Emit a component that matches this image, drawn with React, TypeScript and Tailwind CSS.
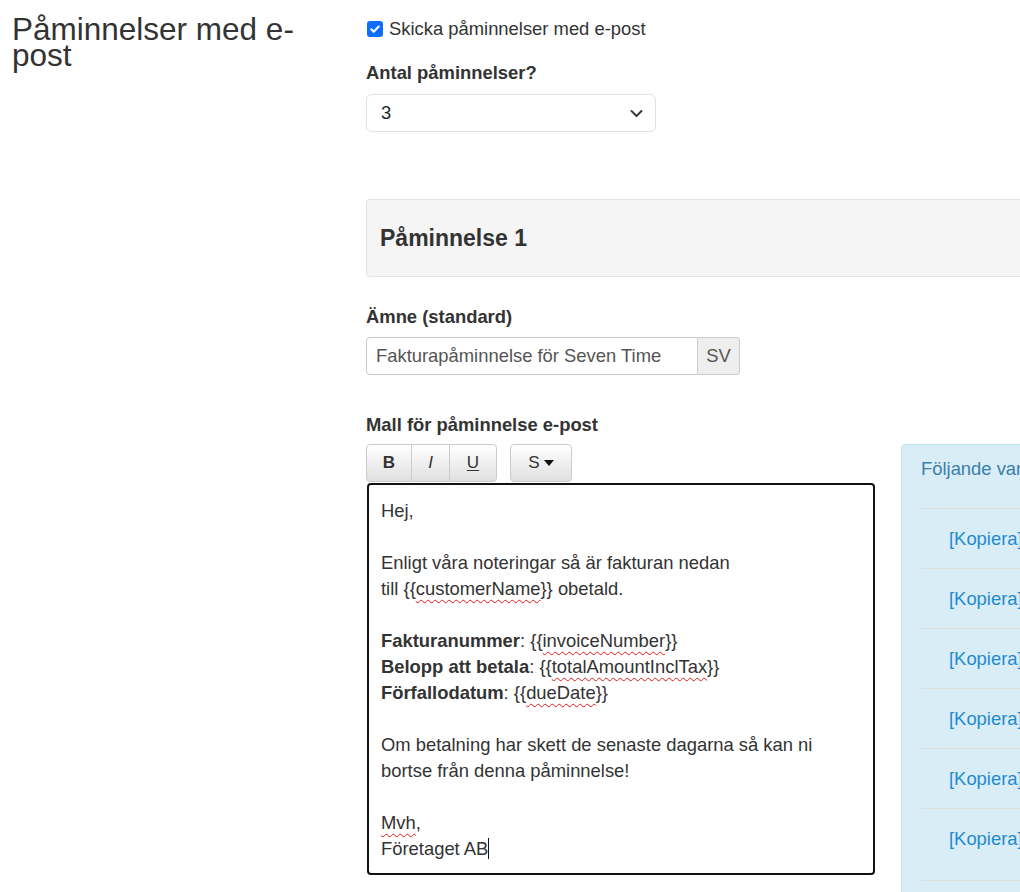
import React from "react";

const Var = ({ name }: { name: string }) => (
    <>
        {"{{"}
        <span className="underline decoration-wavy decoration-[#e01b1b] decoration-1 underline-offset-[4px]">{name}</span>
        {"}}"}
    </>
);

const Line = ({ children }: { children?: React.ReactNode }) => (
    <div className="h-[26px] whitespace-nowrap">{children}</div>
);

const ToolButton = ({ children, className = "" }: { children: React.ReactNode; className?: string }) => (
    <button className={`h-[38px] flex items-center justify-center bg-gradient-to-b from-white to-[#e0e0e0] border border-[#ccc] text-[#333] text-[17px] ${className}`}>
        {children}
    </button>
);

export default function App() {
    const rows = [0, 1, 2, 3, 4, 5];

    return (
        <div className="w-[1020px] h-[892px] overflow-hidden bg-white text-[#333] text-[18.4px] leading-[26px] font-['Liberation_Sans',Arial,sans-serif]">
            <div className="flex">
                <div className="w-[366px] shrink-0 pl-[12px] pr-[30px] pt-[16px]">
                    <h2 className="text-[31.5px] leading-[26px] font-normal">Påminnelser med e-post</h2>
                </div>

                <div className="w-[900px] shrink-0 pt-[16px]">
                    <label className="flex items-center gap-[6px]">
                        <span className="w-[16px] h-[16px] ml-[1px] rounded-[3px] bg-[#0d6efd] flex items-center justify-center">
                            <svg width="12" height="12" viewBox="0 0 12 12" fill="none">
                                <path d="M2.3 6.3l2.4 2.4 5-5.2" stroke="white" strokeWidth="2" strokeLinecap="round" strokeLinejoin="round" />
                            </svg>
                        </span>
                        <span>Skicka påminnelser med e-post</span>
                    </label>

                    <div className="mt-[18px] font-bold">Antal påminnelser?</div>
                    <div className="mt-[8px] w-[290px] h-[38px] border border-[#dee2e6] rounded-[6px] flex items-center justify-between pl-[14px] pr-[12px]">
                        <span className="text-[#212529]">3</span>
                        <svg width="13" height="9" viewBox="0 0 13 9" fill="none">
                            <path d="M1.5 2l5 5 5-5" stroke="#343a40" strokeWidth="2" strokeLinecap="round" strokeLinejoin="round" />
                        </svg>
                    </div>

                    <div className="mt-[67px] h-[78px] border border-[#e3e3e3] bg-[#f5f5f5] rounded-[4px] flex items-center px-[13px]">
                        <h4 className="text-[23px] font-bold leading-none">Påminnelse 1</h4>
                    </div>

                    <div className="mt-[27px] font-bold">Ämne (standard)</div>
                    <div className="mt-[7px] flex h-[38px] w-[374px]">
                        <div className="flex-1 border border-[#ccc] rounded-l-[4px] flex items-center pl-[9px] text-[#555]">
                            Fakturapåminnelse för Seven Time
                        </div>
                        <div className="w-[42px] border border-l-0 border-[#ccc] bg-[#eee] rounded-r-[4px] flex items-center justify-center text-[#555]">
                            SV
                        </div>
                    </div>

                    <div className="mt-[37px] font-bold">Mall för påminnelse e-post</div>

                    <div className="mt-[6px] flex items-start gap-[26px]">
                        <div className="w-[509px] shrink-0">
                            <div className="flex gap-[13px]">
                                <div className="flex">
                                    <ToolButton className="w-[46px] rounded-l-[4px] font-bold">B</ToolButton>
                                    <ToolButton className="w-[39px] -ml-px italic">I</ToolButton>
                                    <ToolButton className="w-[48px] -ml-px rounded-r-[4px] underline underline-offset-2">U</ToolButton>
                                </div>
                                <ToolButton className="w-[62px] rounded-[4px] gap-[4px]">
                                    S
                                    <svg width="10" height="6" viewBox="0 0 10 6">
                                        <path d="M0 0h10L5 6z" fill="#111" />
                                    </svg>
                                </ToolButton>
                            </div>
                            <div className="mt-px ml-px h-[392px] border-2 border-[#111] rounded-[4px] pt-[13px] px-[12px] text-[#333]">
                                <Line>Hej,</Line>
                                <Line />
                                <Line>Enligt våra noteringar så är fakturan nedan</Line>
                                <Line>till <Var name="customerName" /> obetald.</Line>
                                <Line />
                                <Line><b>Fakturanummer</b>: <Var name="invoiceNumber" /></Line>
                                <Line><b>Belopp att betala</b>: <Var name="totalAmountInclTax" /></Line>
                                <Line><b>Förfallodatum</b>: <Var name="dueDate" /></Line>
                                <Line />
                                <Line>Om betalning har skett de senaste dagarna så kan ni</Line>
                                <Line>bortse från denna påminnelse!</Line>
                                <Line />
                                <Line>
                                    <span className="underline decoration-wavy decoration-[#e01b1b] decoration-1 underline-offset-[4px]">Mvh</span>,
                                </Line>
                                <Line>
                                    Företaget AB<span className="inline-block w-px h-[21px] bg-[#111] align-[-4px]" />
                                </Line>
                            </div>
                        </div>

                        <div className="w-[360px] shrink-0 h-[460px] bg-[#d9edf7] border border-[#bce8f1] rounded-[4px] px-[19px] pt-[11px]">
                            <div className="text-[#3b7fa8] whitespace-nowrap pb-[26px]">Följande variabler kan användas i mallen:</div>
                            {rows.map(i => (
                                <div
                                    key={i}
                                    className={`border-t border-[#ddd] pl-[28px] pt-[17px] ${i === 5 ? "pb-[28px]" : "pb-[16px]"}`}
                                >
                                    <a className="text-[#1f8ad0] whitespace-nowrap">[Kopiera]</a>
                                </div>
                            ))}
                            <div className="border-t border-[#ddd]" />
                        </div>
                    </div>
                </div>
            </div>
        </div>
    );
}
